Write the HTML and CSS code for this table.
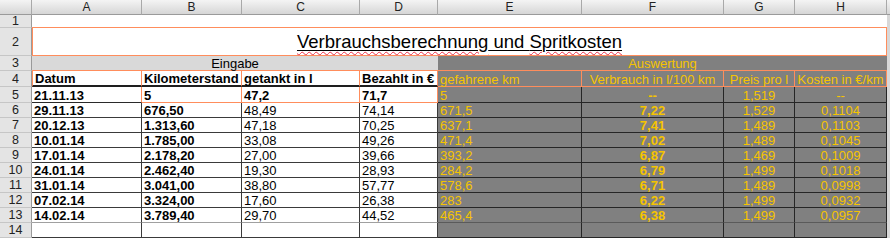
FILE: index.html
```html
<!DOCTYPE html>
<html lang="de">
<head>
<meta charset="utf-8">
<title>Verbrauchsberechnung</title>
<link rel="stylesheet" href="styles.css">
</head>
<body>
<table class="sheet">
  <colgroup>
    <col class="c-hdr"><col class="c-a"><col class="c-b"><col class="c-c"><col class="c-d"><col class="c-e"><col class="c-f"><col class="c-g"><col class="c-h"><col class="c-x">
  </colgroup>
  <tr class="r-colhdr">
    <th class="corner"></th><th class="colhdr">A</th><th class="colhdr">B</th><th class="colhdr">C</th><th class="colhdr">D</th><th class="colhdr">E</th><th class="colhdr">F</th><th class="colhdr">G</th><th class="colhdr">H</th><th class="colhdr last"></th>
  </tr>
  <tr class="r-1">
    <th class="rowhdr">1</th><td class="blank" colspan="8"></td><td class="out"></td>
  </tr>
  <tr class="r-2">
    <th class="rowhdr">2</th><td class="title" colspan="8"><span class="title-text"><span class="spell">Verbrauchsberechnung</span> und <span class="spell">Spritkosten</span></span></td><td class="out"></td>
  </tr>
  <tr class="r-3">
    <th class="rowhdr">3</th><td class="grp-in" colspan="4">Eingabe</td><td class="grp-out" colspan="4">Auswertung</td><td class="out"></td>
  </tr>
  <tr class="r-4">
    <th class="rowhdr">4</th>
    <td class="h-in">Datum</td><td class="h-in">Kilometerstand</td><td class="h-in">getankt in l</td><td class="h-in">Bezahlt in €</td>
    <td class="h-out">gefahrene km</td><td class="h-out ctr">Verbrauch in l/100 km</td><td class="h-out ctr">Preis pro l</td><td class="h-out ctr">Kosten in €/km</td><td class="out"></td>
  </tr>
  <tr class="r-d first">
    <th class="rowhdr">5</th>
    <td class="in b">21.11.13</td><td class="in b">5</td><td class="in b">47,2</td><td class="in b">71,7</td>
    <td class="o">5</td><td class="o ctr b">--</td><td class="o ctr">1,519</td><td class="o ctr">--</td><td class="out"></td>
  </tr>
  <tr class="r-d">
    <th class="rowhdr">6</th>
    <td class="in b">29.11.13</td><td class="in b">676,50</td><td class="in">48,49</td><td class="in">74,14</td>
    <td class="o">671,5</td><td class="o ctr b">7,22</td><td class="o ctr">1,529</td><td class="o ctr">0,1104</td><td class="out"></td>
  </tr>
  <tr class="r-d">
    <th class="rowhdr">7</th>
    <td class="in b">20.12.13</td><td class="in b">1.313,60</td><td class="in">47,18</td><td class="in">70,25</td>
    <td class="o">637,1</td><td class="o ctr b">7,41</td><td class="o ctr">1,489</td><td class="o ctr">0,1103</td><td class="out"></td>
  </tr>
  <tr class="r-d">
    <th class="rowhdr">8</th>
    <td class="in b">10.01.14</td><td class="in b">1.785,00</td><td class="in">33,08</td><td class="in">49,26</td>
    <td class="o">471,4</td><td class="o ctr b">7,02</td><td class="o ctr">1,489</td><td class="o ctr">0,1045</td><td class="out"></td>
  </tr>
  <tr class="r-d">
    <th class="rowhdr">9</th>
    <td class="in b">17.01.14</td><td class="in b">2.178,20</td><td class="in">27,00</td><td class="in">39,66</td>
    <td class="o">393,2</td><td class="o ctr b">6,87</td><td class="o ctr">1,469</td><td class="o ctr">0,1009</td><td class="out"></td>
  </tr>
  <tr class="r-d">
    <th class="rowhdr">10</th>
    <td class="in b">24.01.14</td><td class="in b">2.462,40</td><td class="in">19,30</td><td class="in">28,93</td>
    <td class="o">284,2</td><td class="o ctr b">6,79</td><td class="o ctr">1,499</td><td class="o ctr">0,1018</td><td class="out"></td>
  </tr>
  <tr class="r-d">
    <th class="rowhdr">11</th>
    <td class="in b">31.01.14</td><td class="in b">3.041,00</td><td class="in">38,80</td><td class="in">57,77</td>
    <td class="o">578,6</td><td class="o ctr b">6,71</td><td class="o ctr">1,489</td><td class="o ctr">0,0998</td><td class="out"></td>
  </tr>
  <tr class="r-d">
    <th class="rowhdr">12</th>
    <td class="in b">07.02.14</td><td class="in b">3.324,00</td><td class="in">17,60</td><td class="in">26,38</td>
    <td class="o">283</td><td class="o ctr b">6,22</td><td class="o ctr">1,499</td><td class="o ctr">0,0932</td><td class="out"></td>
  </tr>
  <tr class="r-d last">
    <th class="rowhdr">13</th>
    <td class="in b">14.02.14</td><td class="in b">3.789,40</td><td class="in">29,70</td><td class="in">44,52</td>
    <td class="o">465,4</td><td class="o ctr b">6,38</td><td class="o ctr">1,499</td><td class="o ctr">0,0957</td><td class="out"></td>
  </tr>
  <tr class="r-d empty">
    <th class="rowhdr">14</th>
    <td class="in"></td><td class="in"></td><td class="in"></td><td class="in"></td>
    <td class="o"></td><td class="o"></td><td class="o"></td><td class="o"></td><td class="out"></td>
  </tr>
</table>
</body>
</html>
```

FILE: styles.css
```css
html, body {
  margin: 0;
  padding: 0;
  background: #ffffff;
}

.sheet {
  border-collapse: separate;
  border-spacing: 0;
  table-layout: fixed;
  width: 890px;
  font-family: "Liberation Sans", Arial, sans-serif;
  font-size: 13px;
  color: #000;
}

.sheet th, .sheet td {
  box-sizing: border-box;
  padding: 0 2px;
  white-space: nowrap;
  line-height: 13px;
  vertical-align: bottom;
  text-align: left;
  font-weight: normal;
}

.c-hdr { width: 32px; }
.c-a { width: 110px; }
.c-b { width: 100px; }
.c-c { width: 118px; }
.c-d { width: 78px; }
.c-e { width: 144px; }
.c-f { width: 142px; }
.c-g { width: 71px; }
.c-h { width: 92px; }
.c-x { width: 3px; }

/* column header */
.r-colhdr { height: 15px; }
.colhdr, .corner {
  background: linear-gradient(#f4f4f4, #d6d6d6);
  border-right: 1px solid #a9a9a9;
  border-bottom: 1px solid #9a9a9a;
  font-size: 12px;
  line-height: 13px;
  color: #222;
  text-align: center !important;
  vertical-align: middle !important;
}
.colhdr.last { border-right: none; }

/* row header */
.rowhdr {
  background: #e4e4e4;
  border-right: 1px solid #9a9a9a;
  border-bottom: 1px solid #c6c6c6;
  font-size: 12.5px;
  line-height: 12px !important;
  color: #222;
  text-align: center !important;
  vertical-align: middle !important;
}

.out {
  background: #d8d8d8;
  padding: 0 !important;
}

/* row 1 */
.r-1 { height: 13px; }
.blank {
  border-bottom: 1px solid #ff8d5c;
}

/* row 2 title */
.r-2 { height: 28px; }
.title {
  border-left: 1px solid #ff8d5c;
  border-right: 1px solid #ff8d5c;
  border-bottom: 1px solid #ff8d5c;
  text-align: center !important;
  vertical-align: middle !important;
  line-height: 22px !important;
  padding-top: 2px !important;
}
.title-text {
  font-size: 18.5px;
  text-decoration: underline;
  text-decoration-color: #000;
  text-decoration-thickness: 1px;
  text-underline-offset: 2px;
}
.spell {
  text-decoration: underline wavy #e8304a;
  text-decoration-thickness: 1px;
  text-underline-offset: 3px;
}

/* row 3 group headers */
.r-3 { height: 15px; }
.grp-in {
  background: #d9d9d9;
  text-align: center !important;
  border-bottom: 1px solid #ff8d5c;
}
.grp-out {
  background: #808080;
  color: #f5c400;
  text-align: center !important;
  border-bottom: 1px solid #ff8d5c;
}

/* row 4 column headings */
.r-4 { height: 16px; }
.h-in {
  font-weight: bold !important;
  border-right: 1px solid #ff8d5c;
  border-bottom: 2px solid #1e1e1e;
}
.r-4 .h-in:first-of-type { border-left: 1px solid #ff8d5c; }
.h-out {
  background: #808080;
  color: #f5c400;
  border-right: 1px solid #ff8d5c;
  border-bottom: 1px solid #ff8d5c;
}

/* data rows */
.r-d { height: 15px; }
.r-d.first { height: 16px; }
.in {
  border-right: 1px solid #3a3a3a;
  border-bottom: 1px solid #3a3a3a;
}
.o {
  background: #808080;
  color: #f5c400;
  border-right: 1px solid #262626;
  border-bottom: 1px solid #262626;
}
.first .in {
  border-right-color: #ff8d5c;
  border-bottom-color: #ff8d5c;
}
.first .in:first-of-type { border-bottom-color: #2a2a2a; }
.first .o:first-of-type { border-left: 1px solid #ff8d5c; }
.last .in { border-bottom-color: #a0a0a0; }
.last .o { border-bottom-color: #5a5a5a; }

.b { font-weight: bold !important; }
.ctr { text-align: center !important; }
```
